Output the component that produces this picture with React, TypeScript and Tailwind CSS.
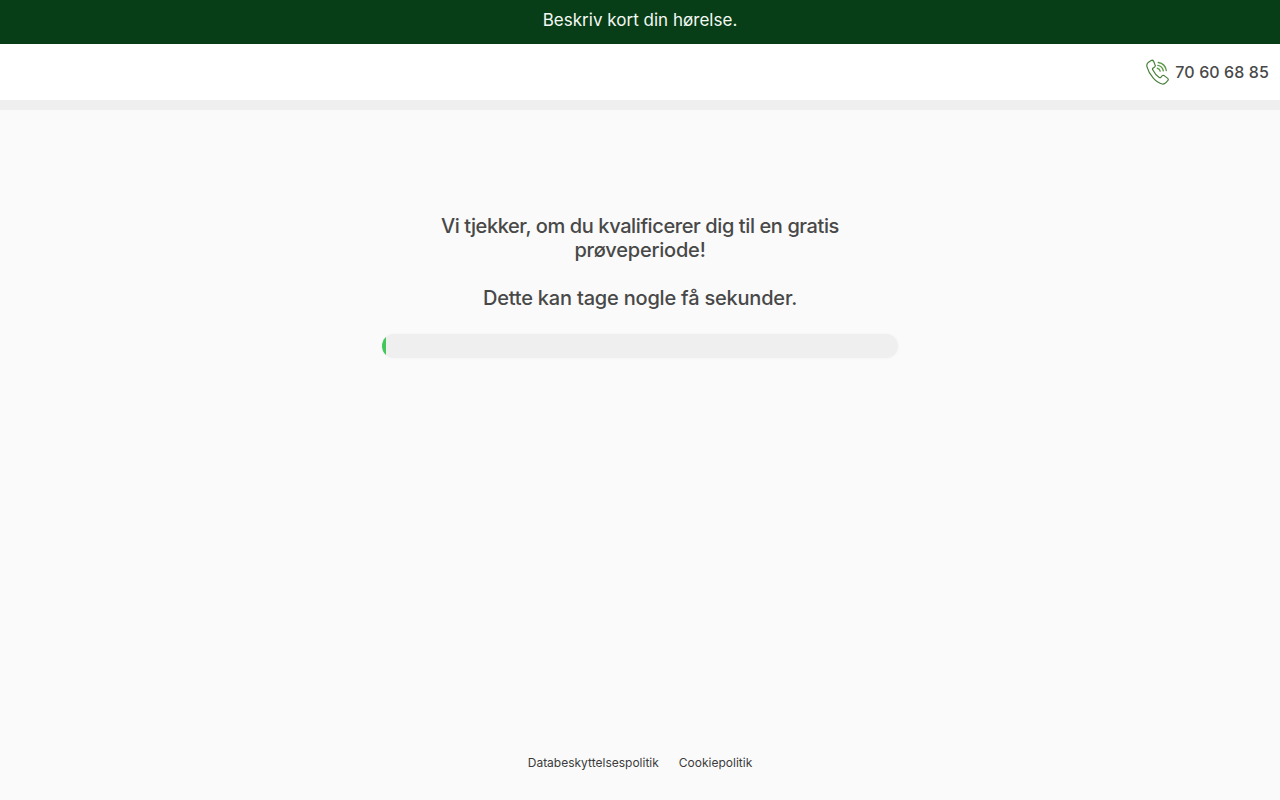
export default function App() {
  return (
    <div className="h-[800px] flex flex-col overflow-hidden bg-[#fafafa] font-['Inter',sans-serif] text-[#484848]">
      {/* Top banner */}
      <div className="h-[44px] shrink-0 bg-[#073e17] text-[#f4f8f2] flex items-center justify-center pb-[3px] text-[17px] tracking-[0.02px]">
        Beskriv kort din hørelse.
      </div>

      {/* Header with phone number */}
      <header className="h-[66px] shrink-0 bg-white border-b-[10px] border-[#efefef] flex items-center justify-end pr-[11px]">
        <a className="flex items-center gap-[5px] text-[16px] font-medium tracking-[0.1px]">
          <svg width="24" height="26" viewBox="0 0 24 26" fill="none" stroke="#47803a" strokeWidth="1.2" strokeLinecap="round" strokeLinejoin="round">
            <path d="M5.2 1.6 2.2 3.6C.8 4.600.6 6.200 1 7.800c1.100 4.200 3.400 8 6.300 11.300 2.400 2.700 5.400 5.200 9 5.900 1.400.2 2.700-.3 3.600-1.300l2-2.300c.5-.7.4-1.500-.2-2l-3.600-2.800c-.6-.4-1.300-.4-1.800.1l-1.500 1.600c-.4.4-1 .5-1.500.2-2.900-1.800-5.200-4.800-6.700-7.900-.2-.5-.1-1.100.3-1.400l1.800-1.300c.6-.5.8-1.200.4-1.900L7.500 2.100c-.5-.8-1.500-1-2.300-.5Z" />
            <path d="M11.300 9.200c1.500.3 2.600 1.400 2.900 2.900" stroke="#5c9a48" strokeWidth="1.400" />
            <path d="M11.800 6.400c2.900.5 5 2.700 5.500 5.500" stroke="#5c9a48" strokeWidth="1.400" />
            <path d="M12.300 3.500c4.200.7 7.300 3.900 8 8" stroke="#5c9a48" strokeWidth="1.400" />
          </svg>
          <span>70 60 68 85</span>
        </a>
      </header>

      <main className="flex-1 flex flex-col items-center pt-[104px]">
        <div className="w-[420px] text-center text-[20px] leading-[24px] font-medium tracking-[-0.2px]">
          <p>
            <span className="tracking-[-0.4px]">Vi tjekker, om du kvalificerer dig til en gratis</span> prøveperiode!
          </p>
          <p className="mt-[24px]">Dette kan tage nogle få sekunder.</p>
        </div>

        {/* Progress bar */}
        <div className="mt-[24px] w-[516px] h-[24px] rounded-full bg-[#efefef] overflow-hidden shadow-[0_0_3px_rgba(0,0,0,0.04)]">
          <div className="h-full w-[4px] bg-[#43c75a]" />
        </div>
      </main>

      <footer className="h-[50px] shrink-0 flex justify-center gap-[20px] pt-[5px] text-[12px] leading-[16px] text-[#3c3c3c]">
        <a>Databeskyttelsespolitik</a>
        <a>Cookiepolitik</a>
      </footer>
    </div>
  );
}
